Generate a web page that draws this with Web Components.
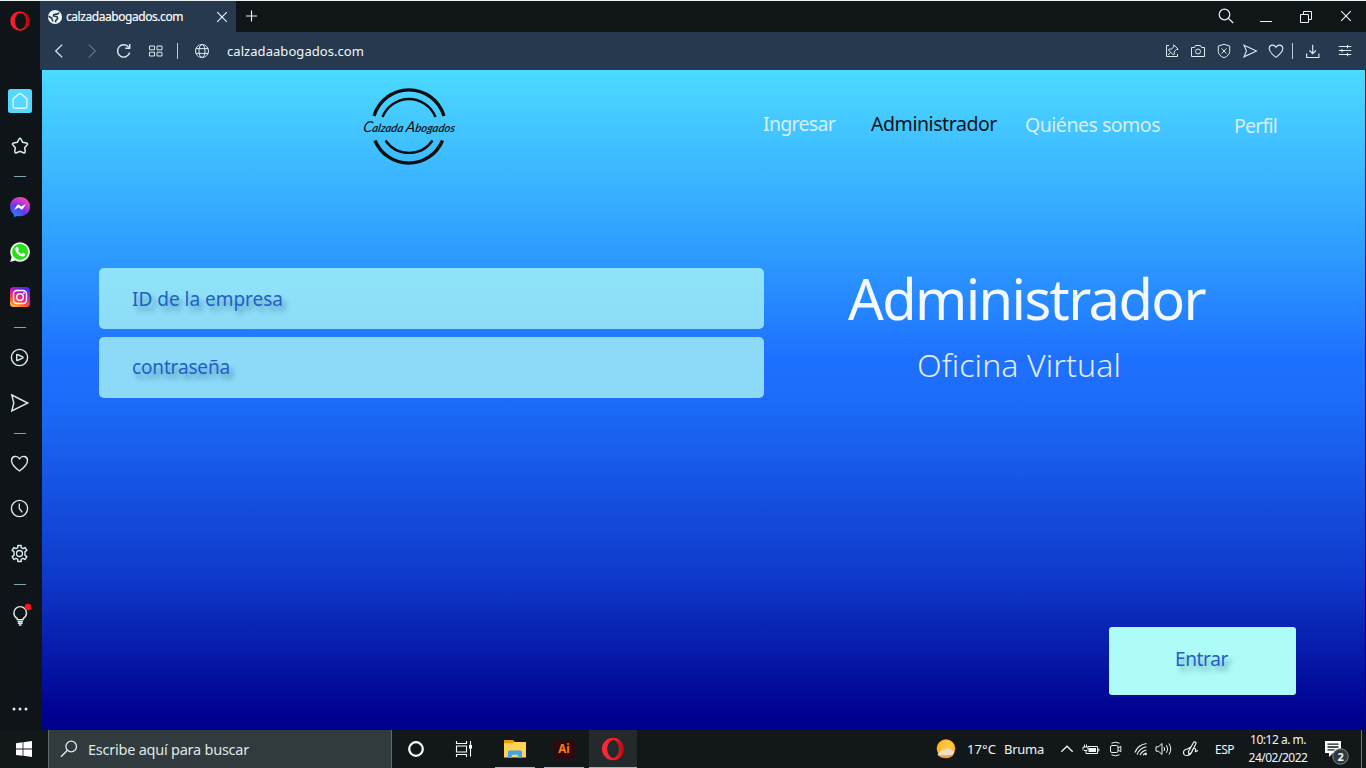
<!DOCTYPE html>
<html lang="es">
<head>
<meta charset="utf-8">
<title>calzadaabogados.com</title>
<style>
html,body{margin:0;height:100%;overflow:hidden;background:#101518}
body{font-family:"Noto Sans","Open Sans",sans-serif;color:#e8f3f5}
</style>
</head>
<body>
<desktop-screen></desktop-screen>
<script>
const ICONS = {
  opera:[20,20,'<defs><linearGradient id="g" x1="0" x2="1"><stop offset="0" stop-color="#ff2036"/><stop offset=".6" stop-color="#f3101f"/><stop offset="1" stop-color="#a80208"/></linearGradient></defs><path fill="url(#g)" fill-rule="evenodd" stroke="none" d="M10 .2a9.700 9.800 0 1 0 0 19.600A9.700 9.800 0 1 0 10 .2zM10.400 1.900a5.600 8.100 0 1 0 0 16.200a5.600 8.100 0 1 0 0-16.200z"/>'],
  operaBig:[24,24,'<defs><linearGradient id="g" x1="0" x2="1"><stop offset="0" stop-color="#ff2b3a"/><stop offset=".65" stop-color="#f01c26"/><stop offset="1" stop-color="#b0080e"/></linearGradient></defs><path fill="url(#g)" fill-rule="evenodd" stroke="none" d="M12 .8a11 11.200 0 1 0 0 22.400A11 11.200 0 1 0 12 .8zM12.200 3.100a5.900 8.900 0 1 0 0 17.800a5.900 8.900 0 1 0 0-17.800z"/>'],
  world:[14,14,'<circle cx="7" cy="7" r="7" fill="#eef6f8" stroke="none"/><path fill="none" stroke="#26394f" stroke-width="1.600" d="M11 2.600Q9.800 4.700 8 4L5.800 4.600 5.500 6 9 6.800 9.700 8.500 7.800 10.300 7.500 12.300M.6 6.200 3.600 8 5 11.500"/>'],
  x:[12,12,'<path stroke-width="1.150" d="M1.200 1.200l9.600 9.600M10.800 1.200l-9.600 9.600"/>'],
  plus:[12,12,'<path d="M5.500 .5v11M0 6h11" stroke-width="1.150"/>'],
  search:[16,16,'<circle cx="6.500" cy="6.500" r="5.300" stroke-width="1.200"/><path stroke-width="1.300" d="M10.400 10.400l4.800 4.600"/>'],
  min:[14,14,'<path d="M1 12.500h12"/>'],
  restore:[14,14,'<path d="M1.500 4.500h8v8h-8zM4.500 4V1.500h8v8H10"/>'],
  back:[14,14,'<path stroke-width="1.250" d="M10.200.6 3.700 7l6.500 6.400"/>'],
  fwd:[14,14,'<path stroke-width="1.150" d="M3.800.6 10.300 7l-6.500 6.400"/>'],
  reload:[16,16,'<path d="M12.700 4.200A6.200 6.200 0 1 0 13.700 9.500M13.700 1v4.300H9.300" stroke-width="1.400"/>'],
  tiles:[14,12,'<path d="M.5 1h5v3.800h-5zM8 1h5v3.800H8zM.5 7.200h5V11h-5zM8 7.200h5V11H8z"/>'],
  globe:[16,16,'<circle cx="8" cy="8" r="6.500"/><ellipse cx="8" cy="8" rx="3" ry="6.500"/><path d="M1.800 5.600h12.400M1.800 10.400h12.400"/>'],
  pin:[16,16,'<path d="M5 2.500H2.500v11h11V11M9.800 1.800l4.400 4.400-2 .4-2 2.200.2 2.400-1.200.6-4.800-4.800.8-1 2.400.1 2-2.200zM6.800 9.200 4 12"/>'],
  camera:[16,16,'<path d="M1.500 4.500h3l1-2h5l1 2h3v9h-13z"/><circle cx="8" cy="8.500" r="2.500"/>'],
  shield:[16,16,'<path d="M8 1.300 13.700 3v5.500c0 3-2.600 5-5.700 6.300-3.100-1.300-5.700-3.300-5.700-6.300V3zM5.500 5.500l5 5M10.500 5.500l-5 5"/>'],
  send:[16,16,'<path stroke-width="1.100" d="M2 2.200 14.500 8 2 13.800 4.500 8z"/>'],
  heart:[16,16,'<path stroke-width="1.100" d="M8 14.300C5 12 1.200 9.200 1.200 5.500 1.200 1.600 6 .9 8 4.300 10 .9 14.800 1.600 14.800 5.500 14.800 9.200 11 12 8 14.300z"/>'],
  download:[14,14,'<path stroke-width="1.150" d="M.6 9.500v4h12.300v-4M6.700.8v9M3.500 6.500l3.200 3.200L10 6.500"/>'],
  sliders:[14,12,'<path d="M.8 1.500h12.500M.8 5.500h12.500M.8 9.500h12.500M9.500 0v3.200M4 4v3.200M9.500 8v3.200" stroke-width="1.100"/>'],
  home:[24,24,'<rect width="24" height="24" rx="2.500" fill="#55d8ff" stroke="none"/><path stroke="#dcf7ff" stroke-width="1.500" d="M5.200 9.800 11 4.900q1-.8 2 0l5.800 4.900v7.400q0 2-2 2H7.200q-2 0-2-2z"/>'],
  star:[18,18,'<path stroke-width="1.500" d="M8 2.100q1-1.700 2 0l1.700 3.200 3.700.8q1.900.5.600 2l-2.300 2.600.5 3.900q0 1.800-1.700 1.100L9 14.200l-3.500 1.500q-1.700.7-1.700-1.100l.5-3.900L2 8.100q-1.300-1.500.6-2l3.700-.8z"/>'],
  messenger:[20,20,'<defs><radialGradient id="g" cx=".2" cy="1" r="1.150"><stop offset="0" stop-color="#1490ff"/><stop offset=".5" stop-color="#6a35f0"/><stop offset=".8" stop-color="#d43bd0"/><stop offset="1" stop-color="#ff5570"/></radialGradient></defs><path fill="url(#g)" stroke="none" d="M10 0c5.700 0 10 4.100 10 9.600s-4.300 9.700-10 9.700c-1 0-1.900-.1-2.800-.4L4 20l-.2-2.600C1.400 15.600 0 12.900 0 9.600 0 4.100 4.300 0 10 0z"/><path fill="#fff" stroke="none" d="M4 12.900 7.200 8q.8-1 1.800-.3l2.200 1.700L16 6.900l-3.200 5q-.8 1-1.800.3L8.700 10.500z"/>'],
  whatsapp:[20,20,'<path fill="#f2fbef" stroke="none" d="M.2 20l1.400-5A9.800 9.800 0 1 1 5.300 18.600z"/><circle cx="10.100" cy="9.900" r="8" fill="#25e11c" stroke="none"/><path fill="#fff" stroke="none" d="M6.500 5.100h1.300l1.100 2.500-.9 1.300q1.200 2.200 3.500 3l1.200-1.200 2.500 1.200q.2 2.200-2.200 2.600-2.300.2-5-2.300Q5.200 9.600 5.300 7q.2-1.500 1.200-1.900z"/>'],
  instagram:[20,20,'<defs><linearGradient id="g" x1=".1" y1="1" x2=".6" y2="0"><stop offset="0" stop-color="#ffc64a"/><stop offset=".3" stop-color="#ff5a2c"/><stop offset=".6" stop-color="#e31a9a"/><stop offset="1" stop-color="#4a2af8"/></linearGradient></defs><rect width="20" height="20" rx="3.500" fill="url(#g)" stroke="none"/><g stroke="#fff" stroke-width="1.400"><rect x="3.500" y="3.500" width="13" height="13" rx="3.500"/><circle cx="10" cy="10" r="3.300"/></g><circle cx="13.900" cy="6.200" r=".9" fill="#fff" stroke="none"/>'],
  play:[18,18,'<circle cx="8.500" cy="8.500" r="8.100" stroke-width="1.400"/><path stroke-width="1.400" d="M5.700 6q0-.7.700-.5l5.200 2.400q1 .6 0 1.200l-5.200 2.400q-.7.200-.7-.5z"/>'],
  sendBig:[18,18,'<path stroke-width="1.400" d="M.8 1 16.800 9 .8 17 2.800 9z"/>'],
  heartBig:[18,18,'<path stroke-width="1.400" d="M8.500 16C5 13.500.5 9.800.5 5.600.5 1 6-.2 8.500 3.800c2.500-4 8-2.800 8 1.800 0 4.200-4.500 7.900-8 10.400z"/>'],
  clock:[18,18,'<circle cx="8.500" cy="8.500" r="8.100" stroke-width="1.400"/><path stroke-width="1.300" d="M8.300 3.500v5l3 3.800"/>'],
  gear:[18,18,'<g transform="translate(-.5 -.5)"><path stroke-width="1.400" stroke-linejoin="round" d="M7.300 1h3.400v2.200l1.800 1 2-1.200 1.900 2.900-1.900 1.200v3.800l1.900 1.200-1.900 2.900-2-1.200-1.800 1V17H7.300v-2.200l-1.800-1-2 1.200-1.900-2.900 1.900-1.200V7.100L1.600 5.900 3.500 3l2 1.200 1.800-1z"/><circle cx="9" cy="9" r="3" stroke-width="1.300"/></g>'],
  bulb:[24,24,'<path stroke-width="1.400" d="M9.200 16.600V15.400C7.200 14.200 5.900 12 5.900 9.900a6.300 6.300 0 0 1 12.600 0c0 2.100-1.300 4.300-3.300 5.500v1.200zM9.500 18.500h5.400M9.800 20.300h4.800M10.800 22h2.800"/><circle cx="20" cy="4" r="3.300" fill="#ff151d" stroke="none"/>'],
  dots:[16,4,'<g stroke="none" fill="#dcebee"><circle cx="2" cy="2" r="1.500"/><circle cx="8" cy="2" r="1.500"/><circle cx="14" cy="2" r="1.500"/></g>'],
  windows:[16,16,'<path fill="#fff" stroke="none" d="M0 2.200 6.600 1.300V7.600H0zM7.400 1.200 16 0v7.600H7.400zM0 8.400h6.600v6.400L0 13.900zM7.400 8.400H16V16l-8.600-1.200z"/>'],
  searchWin:[18,18,'<circle cx="11.200" cy="6.500" r="5.300" stroke-width="1.300"/><path stroke-width="1.400" d="M7.400 10.300 1 16.800"/>'],
  cortana:[18,18,'<circle cx="9" cy="9" r="6.800" stroke="#fff" stroke-width="2.200"/>'],
  taskview:[18,18,'<path stroke="#fff" stroke-width="1.100" d="M1.500 1v2.500h10V1M1.500 6h10v6h-10zM1.500 17v-2.500h10V17M15.500 1v15.500"/><rect x="14" y="5" width="3" height="3.500" fill="#fff" stroke="none"/>'],
  folder:[22,20,'<g stroke="none"><path fill="#e79a12" d="M0 1h9l2 2v4H0z"/><path fill="#ffd454" d="M0 4.200h8.500L10 3h12v15.500H0z"/><path fill="#3fa4ee" d="M4 19v-6q0-1.500 1.500-1.500h11Q18 11.500 18 13v6h-3.800v-3.300H7.800V19z"/></g>'],
  chevron:[12,8,'<path stroke-width="1.300" d="M.3 6.800 6 1.200l5.700 5.600"/>'],
  battery:[18,12,'<path d="M6 3.500h9.500v7H4V8M16.800 5.500v3M1 4h5v2.500l-1 1H2l-1-1zM2.500 1.500V4M4.500 1.500V4"/><rect x="6.500" y="5" width="7.500" height="4" fill="currentColor" stroke="none"/>'],
  meet:[14,16,'<rect x="1.500" y="4.500" width="7.500" height="7" rx="1.500"/><path d="M9 7l2.800-1.800v5.600L9 9M2.500 2.200q4-2 8 0M2.500 13.800q4 2 8 0"/>'],
  wifi:[14,14,'<path d="M1 10.500Q3.500 3 12.500 1.500M3 12.500Q5.500 6 12.500 4.700M6 13Q8 9 12.500 8M9 13.300q1-2 3.500-2.300" stroke-width="1.100"/><circle cx="11.800" cy="12.200" r="1.100" fill="currentColor" stroke="none"/>'],
  speaker:[18,14,'<path d="M1 4.800h2.500L7 1.500v11L3.500 9.200H1zM9 5q1.300 2 0 4M11.500 3.200q2.400 3.800 0 7.600M14 1.500q3.600 5.500 0 11"/>'],
  pen:[18,18,'<path stroke-width="1.150" d="M6.500 11.500 11.500 2.500q1.500-1.500 2.700.5L9.500 12.500l-2.700 2zM8.800 7 5.500 9M6 9q-4.500.2-4.500 3.500t4 3q3.500-.5 5-5.500 1-2.500 2.500-1.500t.5 2.500 2.500-.5"/>'],
  notif:[28,26,'<g stroke="none"><path fill="#fff" d="M1 1h16v12H9l-4 4v-4H1z"/><path stroke="#14191b" stroke-width="1.300" d="M3.500 4.200h11M3.500 7h11M3.500 9.800h7"/><circle cx="16.500" cy="16.500" r="7.700" fill="#30383a" stroke="#828b8d"/></g>'],
  weather:[22,20,'<g stroke="none"><circle cx="11" cy="9.500" r="9.300" fill="#ffb31f"/><circle cx="12" cy="8" r="6.500" fill="#ffc63d"/><path fill="#ecdcc8" d="M4 13.500q2-3.800 5-2 3.500-4 6.500-.8 4 0 3.600 3-1 3-5 3H5.500Q.5 17 4 13.500z"/><path fill="#f59c38" d="M3 16q8 1.200 16-.4-3 3.600-8 3.600-5.400 0-8-3.200z"/></g>']
};

const define = (tag, html, setup) => {
  const tpl = document.createElement('template');
  tpl.innerHTML = html;
  customElements.define(tag, class extends HTMLElement {
    connectedCallback(){
      if (this.shadowRoot) return;
      const root = this.attachShadow({mode:'open'});
      root.append(tpl.content.cloneNode(true));
      if (setup) setup(this, root);
    }
  });
};

/* Icon centred in a cell; "cell" is the width the cell takes in its row. */
define('ui-icon', `<style>
:host{display:flex;align-items:center;justify-content:center;flex:none;color:#d8ecef}
svg{display:block;flex:none;fill:none;stroke:currentColor;overflow:visible}
</style><div></div>`, (el, root) => {
  const [w,h,body] = ICONS[el.getAttribute('name')];
  root.querySelector('div').innerHTML = `<svg width="${w}" height="${h}" viewBox="0 0 ${w} ${h}">${body}</svg>`;
  if (el.hasAttribute('cell')) el.style.width = el.getAttribute('cell') + 'px';
});

/* One line of text, tracked so that it fills the given measure. */
define('fit-text', `<style>
:host{display:block;flex:none;white-space:nowrap}
span{display:inline-block}
</style><span><slot></slot></span>`, (el, root) => {
  const w = +el.getAttribute('w'), s = root.querySelector('span');
  const natural = s.getBoundingClientRect().width;
  el.style.width = w + 'px';
  if (natural) s.style.letterSpacing = ((w - natural) / el.textContent.length) + 'px';
});

define('ui-sep', `<style>:host{display:flex;justify-content:center;flex:none}i{width:1px;height:16px;background:#b8cbd6}</style><i></i>`,
  el => el.style.width = el.getAttribute('cell') + 'px');

define('tab-strip', `<style>
:host{display:flex;height:31px;background:#101518;border-top:1px solid #e9f3f4}
.tab{width:196px;background:#26394f;display:flex;align-items:center}
fit-text{font-size:12px;line-height:20px;color:#fff;-webkit-text-stroke:.15px #fff}
.push{flex:1}
ui-icon{color:#e8f3f5}
</style>
<div class="tab"><ui-icon name="world" cell="30"></ui-icon><fit-text w="117" style="margin-left:-4px">calzadaabogados.com</fit-text><div class="push"></div><ui-icon name="x" cell="28"></ui-icon></div>
<ui-icon name="plus" cell="31" style="padding-bottom:2px"></ui-icon><div class="push"></div>
<ui-icon name="search" cell="40" style="padding-bottom:2px"></ui-icon><ui-icon name="min" cell="40" style="padding-bottom:1px"></ui-icon><ui-icon name="restore" cell="40"></ui-icon><ui-icon name="x" cell="40" style="padding-bottom:1px"></ui-icon>`);

define('address-bar', `<style>
:host{display:flex;height:38px;background:#26394f;align-items:center;padding-right:5px}
fit-text{font-size:13px;line-height:20px;margin-left:8px;color:#f2f8fa}
.push{flex:1}
</style>
<ui-icon name="back" cell="37"></ui-icon><ui-icon name="fwd" cell="29" style="color:#60788c"></ui-icon><ui-icon name="reload" cell="35"></ui-icon><ui-icon name="tiles" cell="29"></ui-icon><ui-sep cell="15"></ui-sep><ui-icon name="globe" cell="34"></ui-icon>
<fit-text w="137">calzadaabogados.com</fit-text><div class="push"></div>
<ui-icon name="pin" cell="26"></ui-icon><ui-icon name="camera" cell="26"></ui-icon><ui-icon name="shield" cell="26"></ui-icon><ui-icon name="send" cell="26"></ui-icon><ui-icon name="heart" cell="26"></ui-icon><ui-sep cell="7"></ui-sep><ui-icon name="download" cell="33"></ui-icon><ui-icon name="sliders" cell="32"></ui-icon>`);

define('side-bar', `<style>
:host{display:flex;flex-direction:column;background:#0e1417;border-top:1px solid #e9f3f4;box-sizing:border-box;width:40px}
ui-icon{height:45px}
.brand{height:40px;margin-bottom:37.5px}
hr{width:12px;height:1px;border:0;background:#7fa5ad;margin:7.5px auto}
.push{flex:1}
</style>
<ui-icon class="brand" name="opera"></ui-icon>
<ui-icon name="home"></ui-icon><ui-icon name="star"></ui-icon><hr>
<ui-icon name="messenger"></ui-icon><ui-icon name="whatsapp"></ui-icon><ui-icon name="instagram"></ui-icon><hr>
<ui-icon name="play"></ui-icon><ui-icon name="sendBig"></ui-icon><hr>
<ui-icon name="heartBig"></ui-icon><ui-icon name="clock"></ui-icon><ui-icon name="gear"></ui-icon><hr>
<ui-icon name="bulb"></ui-icon><div class="push"></div><ui-icon name="dots" style="height:43px"></ui-icon>`);

define('firm-logo', `<style>:host{display:block;width:96px;height:78px}svg{display:block;overflow:visible}
text{font:italic 600 11.500px Lato,sans-serif;fill:#0b0e10}.cap{font-size:15px;font-weight:400}</style>
<svg width="96" height="78" viewBox="0 0 96 78" fill="none" stroke="#0b0e10">
<path stroke-width="3.300" d="M12 29A36.500 36.500 0 0 1 82 29M13 53.500A36.500 36.500 0 0 0 80.500 53.500"/>
<path stroke-width="2.400" d="M20.500 30A28.500 28.500 0 0 1 73.500 30M23.500 53.500A28.500 28.500 0 0 0 70.500 53.500"/>
<g stroke="none" transform="translate(.5 44.500) skewX(-10)"><text textLength="92" lengthAdjust="spacingAndGlyphs"><tspan class="cap">C</tspan>alzada <tspan class="cap">A</tspan>bogados</text></g></svg>`);

define('site-header', `<style>
:host{display:flex;height:100px;font-size:19.5px;line-height:30px;color:#d5effb}
firm-logo{margin:17px 0 0 320px}
nav{display:flex;margin:38.500px 0 0 305px}
</style>
<firm-logo></firm-logo>
<nav><fit-text w="72">Ingresar</fit-text><fit-text w="126" style="margin-left:36px;color:#06131b">Administrador</fit-text><fit-text w="135" style="margin:1px 0 0 28px">Quiénes somos</fit-text><fit-text w="43" style="margin:2px 0 0 74px">Perfil</fit-text></nav>`);

define('login-field', `<style>
:host{display:flex;align-items:center;height:61px;border-radius:5px;padding-left:33px;box-sizing:border-box;font-size:19px;line-height:30px;color:#1f5fc6;text-shadow:4px 5px 5px rgba(0,50,100,.4)}
</style><slot></slot>`);

define('site-page', `<style>
:host{display:flex;flex-direction:column;height:660px;width:1323px;background:linear-gradient(#4cdaff 0,#2c97ff 29.500%,#1e71ff 43.500%,#1c6cf9 50%,#0f3acb 76.500%,#00008e 98%)}
main{display:flex;padding:92px 0 0 57px}
form{display:flex;flex-direction:column;gap:8px;width:665px;margin:6px 84px 0 0}
h1,h2{margin:0;font-weight:400}
h1{font-size:56px;line-height:72px;height:70px;color:#f3f8fb;font-weight:380}
h2{font-size:32px;line-height:40px;color:#e3ebf5;font-weight:350;margin:13px 0 0 69px}
footer{display:flex;justify-content:flex-end;margin:auto 69px 35px 0}
button{width:187px;height:68px;border:0;border-radius:3px;background:#aefcf8;display:flex;align-items:center;padding:0 0 4px 66px;font:19px/30px "Noto Sans","Open Sans",sans-serif;color:#1f5fc6;text-shadow:4px 5px 5px rgba(0,50,100,.4)}
</style>
<site-header></site-header>
<main>
<form><login-field style="background:linear-gradient(#8fe4f8,#8ddcf8)"><fit-text w="151">ID de la empresa</fit-text></login-field>
<login-field style="background:#8cdaf8;padding-bottom:1px"><fit-text w="98">contraseña</fit-text></login-field></form>
<section><h1><fit-text w="357">Administrador</fit-text></h1><h2><fit-text w="204">Oficina Virtual</fit-text></h2></section>
</main>
<footer><button type="button"><fit-text w="53">Entrar</fit-text></button></footer>`);

define('task-app', `<style>
:host{display:flex;align-items:center;justify-content:center;box-sizing:border-box;height:38px;width:40px;border-bottom:1px solid #a9b4b6}
</style><slot></slot>`);

define('task-bar', `<style>
:host{display:flex;height:38px;background:#12181a;align-items:stretch;font-size:13px}
.search{width:344px;box-sizing:border-box;background:#313a3c;border:1px solid #616b6d;border-width:0 1px;display:flex;align-items:center}
.search fit-text{font-size:14.500px;color:#dfe8e8}
.ai{width:21px;height:20px;border-radius:3px;background:#2b0a10;color:#ff7c12;font:700 11.500px/20px "Noto Sans","Open Sans",sans-serif;text-align:center}
.push{flex:1}
.tray{display:flex;align-items:center;color:#f0f5f5}
.tray ui-icon{color:#eef4f4}
.clock{font-size:12px;line-height:18px;width:60px;display:flex;flex-direction:column;align-items:center;margin-left:14px}
.note{position:relative;display:flex;margin:8px 0 0 16px}
.note span{position:absolute;left:13.500px;top:9px;font:700 11px/16px "Noto Sans","Open Sans",sans-serif}
.edge{width:1px;height:38px;background:#6c7779;margin:0 4px 0 9px}
</style>
<ui-icon name="windows" cell="48"></ui-icon>
<div class="search"><ui-icon name="searchWin" cell="39" style="margin-top:-1px"></ui-icon><fit-text w="161">Escribe aquí para buscar</fit-text></div>
<ui-icon name="cortana" cell="48"></ui-icon><ui-icon name="taskview" cell="48"></ui-icon>
<task-app style="margin-left:7px"><ui-icon name="folder"></ui-icon></task-app>
<task-app style="margin-left:9px"><div class="ai">Ai</div></task-app>
<task-app style="margin-left:5px;width:48px;background:#24292b"><ui-icon name="operaBig"></ui-icon></task-app>
<div class="push"></div>
<div class="tray">
<ui-icon name="weather" cell="22"></ui-icon><fit-text w="29" style="margin-left:10px">17°C</fit-text><fit-text w="40" style="margin-left:8px">Bruma</fit-text>
<ui-icon name="chevron" cell="24" style="margin-left:11px"></ui-icon><ui-icon name="battery" cell="24"></ui-icon><ui-icon name="meet" cell="26"></ui-icon><ui-icon name="wifi" cell="24"></ui-icon><ui-icon name="speaker" cell="22"></ui-icon><ui-icon name="pen" cell="31"></ui-icon>
<fit-text w="19" style="margin-left:9px;font-size:12px">ESP</fit-text>
<div class="clock"><fit-text w="56">10:12 a. m.</fit-text><fit-text w="59">24/02/2022</fit-text></div>
<div class="note"><ui-icon name="notif"></ui-icon><span>2</span></div><div class="edge"></div>
</div>`);

define('desktop-screen', `<style>
:host{display:grid;width:1366px;height:768px;grid-template:730px 38px/1fr}
.browser{display:grid;grid-template:32px 38px 660px/40px 1fr;background:#0e1417}
side-bar{grid-row:1/4}
site-page{margin-left:2px}
</style>
<div class="browser"><side-bar></side-bar><tab-strip></tab-strip><address-bar></address-bar><site-page></site-page></div>
<task-bar></task-bar>`);
</script>
</body>
</html>
